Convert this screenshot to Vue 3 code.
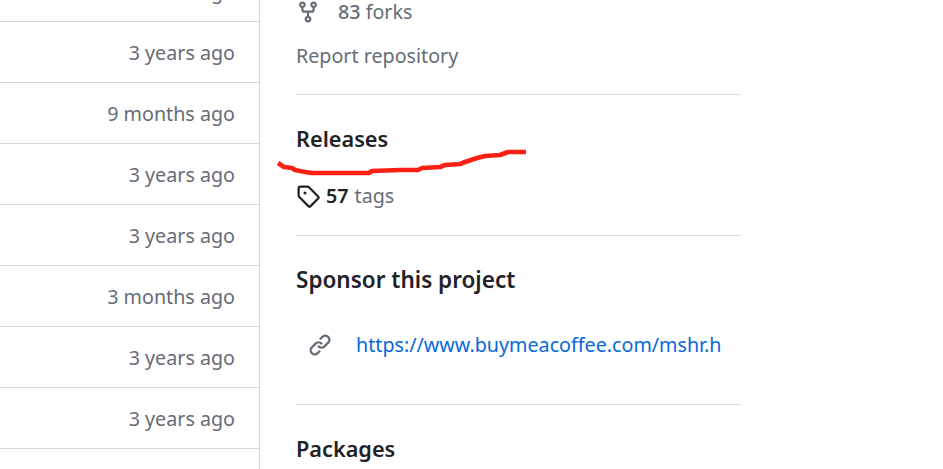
<script setup>
const rows = ['3 months ago','3 years ago','9 months ago','3 years ago','3 years ago','3 months ago','3 years ago','3 years ago']
</script>

<template>
  <div class="page">
    <div class="files">
      <div v-for="(r, i) in rows" :key="i" class="row">{{ r }}</div>
    </div>
    <aside class="side">
      <div class="forks">
        <svg class="ic" width="24" height="24" viewBox="0 0 16 16"><path d="M5 5.372v.878c0 .414.336.75.75.75h4.5a.75.75 0 0 0 .75-.75v-.878a2.25 2.25 0 1 1 1.5 0v.878a2.25 2.25 0 0 1-2.25 2.25h-1.5v2.128a2.251 2.251 0 1 1-1.5 0V8.5h-1.5A2.25 2.25 0 0 1 3.5 6.25v-.878a2.25 2.25 0 1 1 1.5 0ZM5 3.25a.75.75 0 1 0-1.5 0 .75.75 0 0 0 1.5 0Zm6.75.75a.75.75 0 1 0 0-1.5.75.75 0 0 0 0 1.5Zm-3 8.75a.75.75 0 1 0-1.5 0 .75.75 0 0 0 1.5 0Z"/></svg>
        <span><b>83</b> forks</span>
      </div>
      <div class="report">Report repository</div>
      <section class="sec releases">
        <h2>Releases</h2>
        <div class="tags">
          <svg class="ic dark" width="24" height="24" viewBox="0 0 16 16"><path d="M1 7.775V2.75C1 1.784 1.784 1 2.75 1h5.025c.464 0 .91.184 1.238.513l6.25 6.25a1.75 1.75 0 0 1 0 2.474l-5.026 5.026a1.75 1.75 0 0 1-2.474 0l-6.25-6.25A1.752 1.752 0 0 1 1 7.775Zm1.5 0c0 .066.026.13.073.177l6.25 6.25a.25.25 0 0 0 .354 0l5.025-5.025a.25.25 0 0 0 0-.354l-6.25-6.25a.25.25 0 0 0-.177-.073H2.75a.25.25 0 0 0-.25.25ZM6 5a1 1 0 1 1 0 2 1 1 0 0 1 0-2Z"/></svg>
          <strong>57</strong> <span>tags</span>
        </div>
      </section>
      <section class="sec sponsor">
        <h2>Sponsor this project</h2>
        <div class="link">
          <svg class="ic" width="24" height="24" viewBox="0 0 16 16"><path d="m7.775 3.275 1.25-1.25a3.5 3.5 0 1 1 4.95 4.95l-2.5 2.5a3.5 3.5 0 0 1-4.95 0 .751.751 0 0 1 .018-1.042.751.751 0 0 1 1.042-.018 1.998 1.998 0 0 0 2.83 0l2.5-2.5a2.002 2.002 0 0 0-2.83-2.83l-1.25 1.25a.751.751 0 0 1-1.042-.018.751.751 0 0 1-.018-1.042Zm-4.69 9.64a1.998 1.998 0 0 0 2.83 0l1.25-1.25a.751.751 0 0 1 1.042.018.751.751 0 0 1 .018 1.042l-1.25 1.25a3.5 3.5 0 1 1-4.95-4.95l2.5-2.5a3.5 3.5 0 0 1 4.95 0 .751.751 0 0 1-.018 1.042.751.751 0 0 1-1.042.018 1.998 1.998 0 0 0-2.83 0l-2.5 2.5a1.998 1.998 0 0 0 0 2.83Z"/></svg>
          <a>https://www.buymeacoffee.com/mshr.h</a>
        </div>
      </section>
      <section class="sec packages">
        <h2>Packages</h2>
      </section>
    </aside>
    <svg class="scribble" width="943" height="469" viewBox="0 0 943 469">
      <polyline points="278,163 284,167 292,168 295,170 305,172 312,173 369,173 372,171 400,170 418,170 422,168 440,167 445,165 460,164 465,162 477,158 485,156 500,155 508,152 526,152" />
    </svg>
  </div>
</template>

<style>
html, body { margin: 0; background: #fff; }
</style>

<style scoped>
.page {
  position: relative;
  display: flex;
  width: 943px;
  height: 469px;
  overflow: hidden;
  background: #fff;
  font-family: "Noto Sans", "Open Sans", sans-serif;
  font-size: 19.7px;
  color: #656d76;
}
.files {
  width: 259px;
  height: 508px;
  margin-top: -39px;
  flex: none;
  border-right: 1px solid #d0d7de;
}
.row {
  display: flex;
  align-items: center;
  justify-content: flex-end;
  padding-top: 2px;
  height: 58px;
  padding-right: 24px;
  border-bottom: 1px solid #d0d7de;
  line-height: 30px;
}
.side {
  width: 445px;
  margin-left: 36px;
  flex: none;
}
.forks {
  height: 24px;
  display: flex;
  align-items: center;
  gap: 18px;
  line-height: 24px;
}
.forks b { font-weight: 500; }
.ic { fill: #656d76; flex: none; }
.ic.dark { fill: #1f2328; }
.report {
  margin-top: 20px;
  line-height: 24px;
}
.sec { border-top: 1px solid #d8dee4; }
.releases { margin-top: 26px; height: 140px; }
h2 {
  margin: 0;
  color: #1f2328;
  font-size: 21.7px;
  font-weight: 600;
  line-height: 32px;
}
.releases h2 { margin-top: 28px; }
.tags {
  display: flex;
  align-items: center;
  gap: 6px;
  margin-top: 26px;
  line-height: 30px;
}
.tags strong { color: #1f2328; font-weight: 600; }
.sponsor { height: 168px; }
.sponsor h2 { margin-top: 28px; font-size: 22.5px; }
.link {
  display: flex;
  align-items: center;
  gap: 24px;
  margin-top: 34px;
  padding-left: 12px;
  line-height: 30px;
}
.link a { color: #0969da; white-space: nowrap; }
.packages h2 { margin-top: 28px; }
.scribble {
  position: absolute;
  left: 0;
  top: 0;
  pointer-events: none;
}
.scribble polyline {
  fill: none;
  stroke: #ff2015;
  stroke-width: 4.6;
  stroke-linejoin: round;
}
</style>
